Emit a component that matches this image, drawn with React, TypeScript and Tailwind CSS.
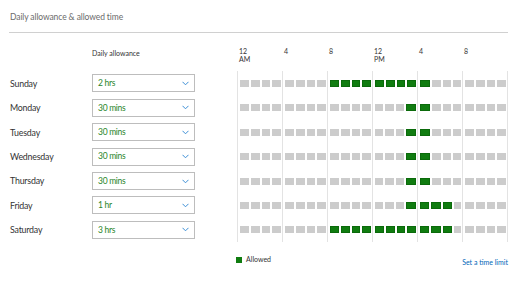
const DAYS: { name: string; limit: string; allowed: number[] }[] = [
  { name: "Sunday", limit: "2 hrs", allowed: [8, 9, 10, 11, 12, 13, 14, 15, 16] },
  { name: "Monday", limit: "30 mins", allowed: [15, 16] },
  { name: "Tuesday", limit: "30 mins", allowed: [15, 16] },
  { name: "Wednesday", limit: "30 mins", allowed: [15, 16] },
  { name: "Thursday", limit: "30 mins", allowed: [15, 16] },
  { name: "Friday", limit: "1 hr", allowed: [15, 16, 17, 18] },
  { name: "Saturday", limit: "3 hrs", allowed: [8, 9, 10, 11, 12, 13, 14, 15, 16, 17, 18] },
]

const HOUR_LABELS = [["12", "AM"], ["4"], ["8"], ["12", "PM"], ["4"], ["8"]]

function Chevron() {
  return (
    <svg width="7" height="5" viewBox="0 0 7 5" fill="none" aria-hidden="true">
      <path d="M0.5 0.8 L3.5 3.8 L6.5 0.8" stroke="#3d8fd6" strokeWidth="1" />
    </svg>
  )
}

function AllowanceSelect({ value }: { value: string }) {
  return (
    <div className="flex h-[18px] w-[103px] items-center justify-between border border-[#bdbdbd] bg-white pl-[5px] pr-[5px]">
      <span className="text-[8.5px] leading-none tracking-[-0.3px] text-[#2a862a]">{value}</span>
      <Chevron />
    </div>
  )
}

// one day = 24 hour cells split into six 4-hour segments
function DayGrid({ allowed }: { allowed: number[] }) {
  return (
    <div className="ml-[42px] flex h-full">
      {[0, 1, 2, 3, 4, 5].map((seg) => (
        <div
          key={seg}
          className={
            seg === 5
              ? "flex h-full w-[46px] items-center gap-[2px] border-x border-[#e3e3e3] pl-[2px] pr-[1px]"
              : "flex h-full w-[45px] items-center gap-[2px] border-l border-[#e3e3e3] pl-[2px] pr-[1px]"
          }
        >
          {[0, 1, 2, 3].map((i) => {
            const hour = seg * 4 + i
            return (
              <div
                key={i}
                className={
                  allowed.includes(hour)
                    ? "h-[7px] flex-1 border border-[#0b6a0b] bg-[#107c10]"
                    : "h-[7px] flex-1 bg-[#cccccc]"
                }
              />
            )
          })}
        </div>
      ))}
    </div>
  )
}

export default function App() {
  return (
    <div
      className="h-[288px] w-[512px] overflow-hidden bg-white pl-[9px] pr-[4px] text-[#333]"
      style={{ fontFamily: 'Lato, "Open Sans", sans-serif' }}
    >
      <div className="flex h-[33px] items-center border-b border-[#d0d0d0] pl-px pt-[3px] text-[8.5px] tracking-[-0.1px] text-[#6b6b6b]">
        Daily allowance &amp; allowed time
      </div>

      <div className="flex h-[38.3px] pt-[15px]">
        <div className="ml-[83px] w-[145px] pt-px text-[7px] leading-[8px] text-[#333]">Daily allowance</div>
        <div className="flex">
          {HOUR_LABELS.map((lines, i) => (
            <div key={i} className="w-[45px] pl-[2px] text-[7px] leading-[7.5px] text-[#333]">
              {lines.map((l) => (
                <div key={l}>{l}</div>
              ))}
            </div>
          ))}
        </div>
      </div>

      <div className="flex flex-col">
        {DAYS.map((d) => (
          <div key={d.name} className="flex h-[24.4px] items-center">
            <span className="w-[83px] pl-px text-[8.8px] tracking-[-0.2px] text-[#333]">{d.name}</span>
            <AllowanceSelect value={d.limit} />
            <DayGrid allowed={d.allowed} />
          </div>
        ))}
      </div>

      <div className="mt-[14px] flex items-start">
        <div className="ml-[227px] flex items-center gap-[4px]">
          <div className="h-[6px] w-[6px] bg-[#107c10]" />
          <span className="text-[7px] leading-none text-[#333]">Allowed</span>
        </div>
        <a className="ml-auto mt-[3px] text-[7px] leading-none text-[#0067b8]">Set a time limit</a>
      </div>
    </div>
  )
}
